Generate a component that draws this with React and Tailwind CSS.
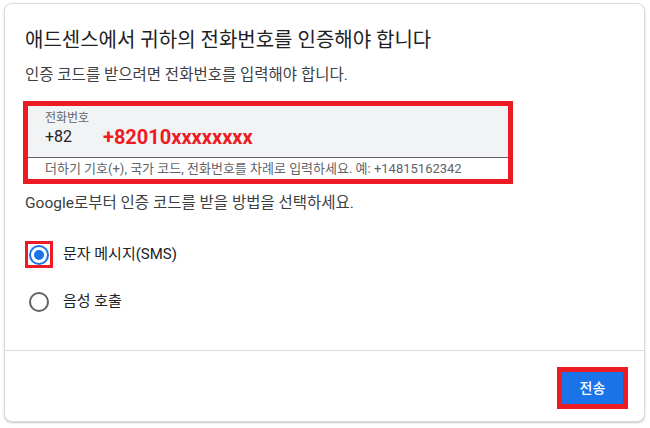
import React, { useState } from 'react';

const font = { fontFamily: 'Roboto, "Noto Sans CJK KR", sans-serif' };

const Radio = ({ checked }) => (
  <span
    className={`flex h-[20px] w-[20px] items-center justify-center rounded-full border-2 ${
      checked ? 'border-[#1a73e8]' : 'border-[#5f6368]'
    }`}
  >
    {checked && <span className="h-[10px] w-[10px] rounded-full bg-[#1a73e8]" />}
  </span>
);

const App = () => {
  const [method, setMethod] = useState('sms');

  return (
    <div className="h-[428px] w-[650px] bg-white pl-[4px] pt-[3px] text-[#202124]" style={font}>
      <div className="flex h-[419px] w-[641px] flex-col rounded-[8px] border border-[#dadce0] bg-white shadow-[0_1px_2px_rgba(60,64,67,0.3)]">
        <div className="flex-1 px-[20px] pt-[23px]">
          <h1 className="text-[20px] leading-[26px] text-[#202124]">애드센스에서 귀하의 전화번호를 인증해야 합니다</h1>
          <p className="mt-[11px] text-[15.5px] leading-[22px] text-[#3c4043]">
            인증 코드를 받으려면 전화번호를 입력해야 합니다.
          </p>

          {/* highlighted phone field */}
          <div className="ml-[-2px] mt-[15px] w-[490px] border-[5px] border-[#ed1c24]">
            <div className="border-b border-[#5f6368] bg-[#f1f3f4] pb-[8px] pl-[17px] pt-[5px]">
              <div className="text-[12px] leading-[14px] text-[#5f6368]">전화번호</div>
              <div className="flex items-center">
                <span className="w-[58px] text-[16px] leading-[24px] text-[#202124]">+82</span>
                <span className="text-[20px] font-bold leading-[24px] text-[#ed1c24]">+82010xxxxxxxx</span>
              </div>
            </div>
            <div className="pb-[2px] pl-[17px] pt-[3px] text-[13px] leading-[16px] text-[#5f6368]">
              더하기 기호(+), 국가 코드, 전화번호를 차례로 입력하세요. 예: +14815162342
            </div>
          </div>

          <p className="mt-[9px] text-[15.5px] leading-[20px] text-[#3c4043]">
            Google로부터 인증 코드를 받을 방법을 선택하세요.
          </p>

          <div className="mt-[28px] flex flex-col gap-[20px]">
            <button onClick={() => setMethod('sms')} className="flex items-center text-left">
              <span className="flex h-[27px] w-[28px] items-center justify-center bg-[#ed1c24]">
                <span className="flex h-[21px] w-[22px] items-center justify-center bg-white">
                  <Radio checked={method === 'sms'} />
                </span>
              </span>
              <span className="ml-[10px] text-[15px] text-[#202124]">문자 메시지(SMS)</span>
            </button>
            <button onClick={() => setMethod('voice')} className="flex items-center text-left">
              <span className="flex h-[27px] w-[28px] items-center justify-center">
                <Radio checked={method === 'voice'} />
              </span>
              <span className="ml-[10px] text-[15px] text-[#202124]">음성 호출</span>
            </button>
          </div>
        </div>

        <div className="flex h-[71px] items-center justify-end border-t border-[#dadce0] pr-[16px]">
          <div className="mt-[4px] border-[5px] border-[#ed1c24]">
            <button className="h-[32px] w-[61px] bg-[#1a73e8] text-[14px] font-medium text-white">전송</button>
          </div>
        </div>
      </div>
    </div>
  );
};

export default App;
